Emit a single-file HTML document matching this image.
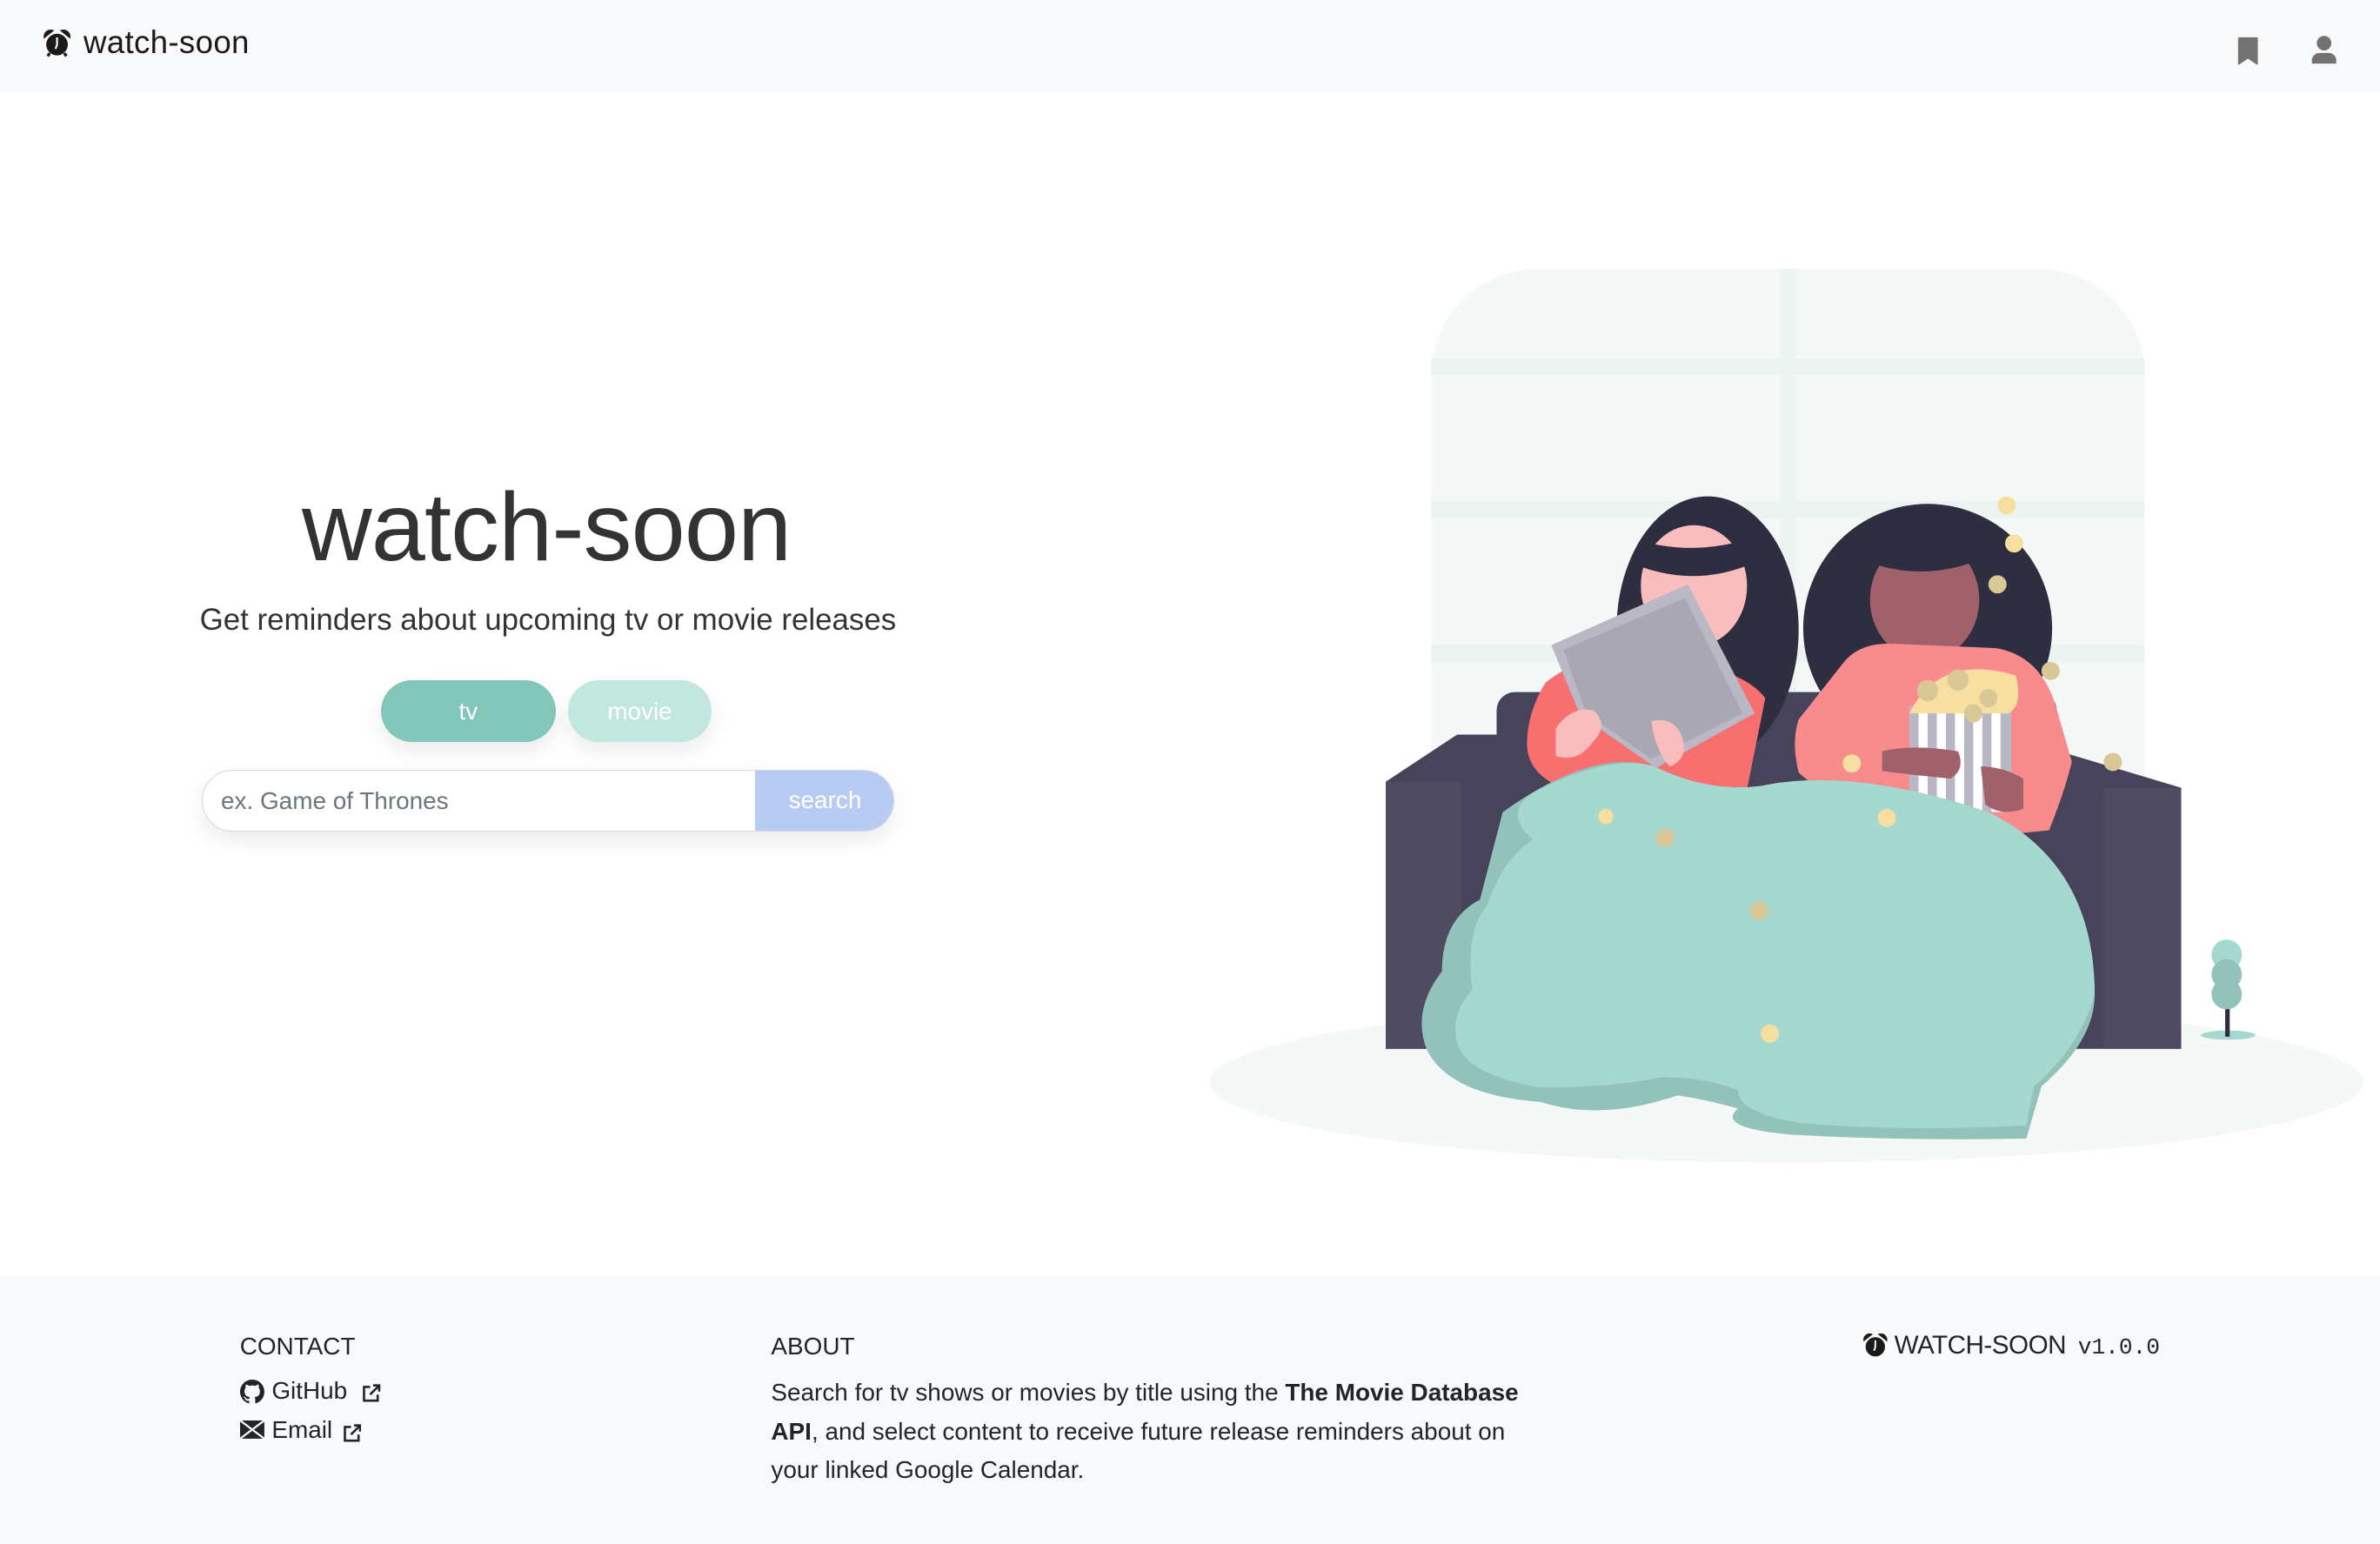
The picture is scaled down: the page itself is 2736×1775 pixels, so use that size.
<!DOCTYPE html>
<html><head><meta charset="utf-8"><style>
html,body{margin:0;padding:0;}
body{width:2736px;height:1775px;overflow:hidden;background:#fff;font-family:"Liberation Sans",sans-serif;}
#w{width:1568px;height:1017px;zoom:1.744898;position:relative;background:#fff;color:#212529;}
.nav{position:absolute;left:0;top:0;width:1568px;height:60px;background:#f8f9fa;}
.abs{position:absolute;white-space:nowrap;}
.foot{position:absolute;left:0;top:841px;width:1568px;height:176px;background:#f8f9fa;}
.btn{position:absolute;border-radius:21px;color:#fff;font-size:16px;text-align:center;line-height:41px;box-shadow:0 6px 14px rgba(0,0,0,.08);}
</style></head><body><div id="w">
<div class="nav">
 <svg class="abs" style="left:28px;top:19px" width="19" height="19" viewBox="0 0 20 20"><circle cx="10" cy="11" r="7.5" fill="#1a1a1a"/><path d="M1.5 5.5a4 4 0 0 1 5-4z M18.5 5.5a4 4 0 0 0-5-4z" fill="#1a1a1a" stroke="#1a1a1a" stroke-width="1.5"/><path d="M10 6v5l-1 3" stroke="#fff" stroke-width="1.3" fill="none"/><path d="M5 17l-1.5 2M15 17l1.5 2" stroke="#1a1a1a" stroke-width="2"/></svg>
 <div class="abs" style="left:55px;top:16px;font-size:21px;color:#1a1a1a;letter-spacing:0.2px">watch-soon</div>
 <svg class="abs" style="left:1474px;top:24px" width="14" height="19" viewBox="0 0 14 19"><path d="M1 1h12v17l-6-4-6 4z" fill="#727272" stroke="#727272" stroke-linejoin="round"/></svg>
 <svg class="abs" style="left:1522px;top:23px" width="18" height="20" viewBox="0 0 18 20"><circle cx="9" cy="5.5" r="4.8" fill="#727272"/><path d="M1 19v-3a5 5 0 0 1 5-4h6a5 5 0 0 1 5 4v3z" fill="#727272"/></svg>
</div>

<div class="abs" style="left:0;width:720px;top:310px;text-align:center;font-size:64px;color:#333;letter-spacing:-0.5px;font-weight:300">watch-soon</div>
<div class="abs" style="left:0;width:722px;top:397px;text-align:center;font-size:20px;color:#333">Get reminders about upcoming tv or movie releases</div>
<div class="btn" style="left:251px;top:448px;width:115px;height:41px;background:#82c7b9">tv</div>
<div class="btn" style="left:374px;top:448px;width:95px;height:41px;background:#c2e7df">movie</div>
<div class="abs" style="left:133px;top:507px;width:456px;height:41px;border-radius:21px;border:1px solid #d6d8de;box-sizing:border-box;overflow:hidden;box-shadow:0 6px 14px rgba(0,0,0,.08);background:#fff">
 <div class="abs" style="left:12px;top:11px;font-size:16px;color:#6c757d">ex. Game of Thrones</div>
 <div class="abs" style="left:364px;top:-1px;width:92px;height:41px;background:#b8cbf2;color:#fff;font-size:16px;text-align:center;line-height:41px">search</div>
</div>

<svg class="abs" style="left:0;top:0" width="1568" height="841" viewBox="0 0 1568 841">
 <ellipse cx="1177" cy="713" rx="380" ry="53" fill="#f4f8f7"/>
 <path d="M943 690V247a70 70 0 0 1 70-70h330a70 70 0 0 1 70 70v443z" fill="#f4f8f7"/>
 <rect x="1173" y="177" width="10" height="300" fill="#ecf4f2"/>
 <rect x="943" y="236" width="470" height="11" fill="#ecf4f2"/>
 <rect x="943" y="330" width="470" height="12" fill="#ecf4f2"/>
 <rect x="943" y="425" width="470" height="11" fill="#ecf4f2"/>
 <rect x="986" y="456" width="369" height="120" rx="12" fill="#46435a"/>
 <path d="M913 515l47-31h360l117 35v172H913z" fill="#46435a"/>
 <rect x="913" y="515" width="50" height="176" fill="#4f4b61"/>
 <rect x="1386" y="519" width="51" height="172" fill="#4f4b61"/>
 <ellipse cx="1125" cy="415" rx="60" ry="88" fill="#2f2e41"/>
 <ellipse cx="1116" cy="386" rx="35" ry="40" fill="#f9bdbd"/>
 <path d="M1080 373q38 14 75-2q-5-12-10-14q-30 8-62 0z" fill="#2f2e41"/>
 <path d="M1018 450q30-25 80-15q50 5 65 25l-12 60h-120q-25-10-25-30q0-20 12-40z" fill="#f76f6f"/>
 <path d="M1022 425l90-40 44 85-65 36-50-35z" fill="#b9b8c4"/>
 <path d="M1030 428l80-34 38 76-60 30-43-30z" fill="#a9a8b2"/>
 <path d="M1025 480q10-15 25-12q10 10 0 20q-10 15-25 10z" fill="#f9bdbd"/>
 <path d="M1088 475q15-3 20 10q5 15-8 20q-10-12-12-30z" fill="#f9bdbd"/>
 <circle cx="1270" cy="414" r="82" fill="#2f2e41"/>
 <ellipse cx="1268" cy="395" rx="36" ry="40" fill="#a0616a"/>
 <path d="M1230 370q38 14 76-2q-8-14-38-14q-30 0-38 16z" fill="#2f2e41"/>
 <path d="M1215 436q10-12 30-12l70 3q30 5 40 40l10 35q-5 20-15 45l-20 2-60-20h-50q-25-10-35-20q-5-20 0-35z" fill="#f88c8c"/>
 <rect x="1258" y="465" width="67" height="70" fill="#fff"/>
 <g fill="#b8b7c6"><rect x="1258" y="465" width="6" height="70"/><rect x="1270" y="465" width="6" height="70"/><rect x="1282" y="465" width="6" height="70"/><rect x="1294" y="465" width="6" height="70"/><rect x="1306" y="465" width="6" height="70"/><rect x="1318" y="465" width="7" height="70"/></g>
 <path d="M1258 470q20-40 70-25q5 20-5 25z" fill="#f7df9f"/>
 <g fill="#d9c795"><circle cx="1270" cy="455" r="7"/><circle cx="1290" cy="448" r="7"/><circle cx="1310" cy="460" r="6"/><circle cx="1300" cy="470" r="6"/></g>
 <path d="M1240 495q20-5 50 0q5 12-5 18q-30-3-45-5z" fill="#a0616a"/>
 <path d="M1305 505q15 0 28 8v20q-15 5-25-3z" fill="#a0616a"/>
 <g transform="translate(0,70.7) scale(1,0.86)">
 <path d="M990 540q60-50 100-35q35 20 70 15q60-15 150 20q70 40 70 140q0 35-35 70l-10 40q-80 2-155-3q-50-5-35-20q-25-8-40-10q-50 20-90 5q-60-5-75-40q-10-30 10-60q0-40 25-55z" fill="#93c2bb"/>
 <path d="M1010 525q50-30 80-20q35 20 70 15q60-15 150 20q70 40 70 140q-10 40-40 70l-5 30q-80 5-150-2q-40-8-40-25q-20-10-50-10q-35 8-80 8q-50-10-55-35q-5-20 10-40q-5-45 10-65q10-35 30-50q-20-20 0-36z" fill="#a5d8cf"/>
 </g>
 <g fill="#f7df9f"><circle cx="1058" cy="538" r="5"/><circle cx="1166" cy="681" r="6"/><circle cx="1322" cy="333" r="6"/><circle cx="1327" cy="358" r="6"/><circle cx="1220" cy="503" r="6"/><circle cx="1243" cy="539" r="6"/></g>
 <g fill="#d9c795"><circle cx="1097" cy="552" r="6"/><circle cx="1159" cy="600" r="6"/><circle cx="1316" cy="385" r="6"/><circle cx="1351" cy="442" r="6"/><circle cx="1392" cy="502" r="6"/></g>
 <ellipse cx="1468" cy="682" rx="18" ry="3" fill="#a5d8cf"/>
 <rect x="1466" y="655" width="3" height="28" fill="#2f2e41"/>
 <circle cx="1467" cy="629" r="10" fill="#a5d8cf"/><circle cx="1467" cy="642" r="10" fill="#93c2bb"/><circle cx="1467" cy="655" r="10" fill="#93c2bb"/>
</svg>

<div class="foot">
 <div class="abs" style="left:158px;top:37px;font-size:16px">CONTACT</div>
 <svg class="abs" style="left:158px;top:68px" width="16" height="16" viewBox="0 0 16 16"><path fill="#212529" d="M8 0C3.58 0 0 3.58 0 8c0 3.54 2.290 6.53 5.47 7.59.4.07.55-.17.55-.38v-1.33c-2.23.48-2.7-1.070-2.7-1.070-.36-.92-.89-1.17-.89-1.17-.73-.5.05-.49.05-.49.8.06 1.23.83 1.23.83.71 1.22 1.87.87 2.33.66.07-.52.28-.87.5-1.070-1.78-.2-3.64-.89-3.64-3.95 0-.87.31-1.59.82-2.150-.08-.2-.36-1.020.08-2.120 0 0 .67-.21 2.2.82a7.6 7.6 0 0 1 4 0c1.53-1.040 2.2-.82 2.2-.82.44 1.1.16 1.92.08 2.12.51.56.82 1.27.82 2.15 0 3.07-1.87 3.75-3.65 3.95.29.25.54.73.54 1.48v2.2c0 .21.15.46.55.38A8 8 0 0 0 16 8c0-4.42-3.58-8-8-8z"/></svg>
 <div class="abs" style="left:179px;top:66px;font-size:16px">GitHub</div>
 <svg class="abs" style="left:238px;top:71px" width="13" height="13" viewBox="0 0 13 13"><path d="M6 2H2v9h9V7M8 1h4v4M12 1L6 7" stroke="#212529" stroke-width="1.5" fill="none"/></svg>
 <svg class="abs" style="left:158px;top:95px" width="16" height="12" viewBox="0 0 16 12"><rect width="16" height="12" fill="#212529"/><path d="M0 0l16 12M16 0L0 12" stroke="#f8f9fa" stroke-width="1.3"/></svg>
 <div class="abs" style="left:179px;top:92px;font-size:16px">Email</div>
 <svg class="abs" style="left:225px;top:97px" width="13" height="13" viewBox="0 0 13 13"><path d="M6 2H2v9h9V7M8 1h4v4M12 1L6 7" stroke="#212529" stroke-width="1.5" fill="none"/></svg>
 <div class="abs" style="left:508px;top:37px;font-size:16px">ABOUT</div>
 <div class="abs" style="left:508px;top:64px;font-size:16px;line-height:25.6px;white-space:normal;width:512px">Search for tv shows or movies by title using the <b>The Movie Database API</b>, and select content to receive future release reminders about on your linked Google Calendar.</div>
 <svg class="abs" style="left:1227px;top:37px" width="17" height="17" viewBox="0 0 20 20"><circle cx="10" cy="11" r="7.5" fill="#1a1a1a"/><path d="M1.5 5.5a4 4 0 0 1 5-4z M18.5 5.5a4 4 0 0 0-5-4z" fill="#1a1a1a" stroke="#1a1a1a" stroke-width="1.5"/><path d="M10 6v5l-1 3" stroke="#fff" stroke-width="1.3" fill="none"/></svg>
 <div class="abs" style="left:1248px;top:36px;font-size:17px;letter-spacing:-0.3px">WATCH-SOON</div>
 <div class="abs" style="left:1369px;top:38px;font-size:15px;font-family:'Liberation Mono',monospace">v1.0.0</div>
</div>
</div></body></html>
